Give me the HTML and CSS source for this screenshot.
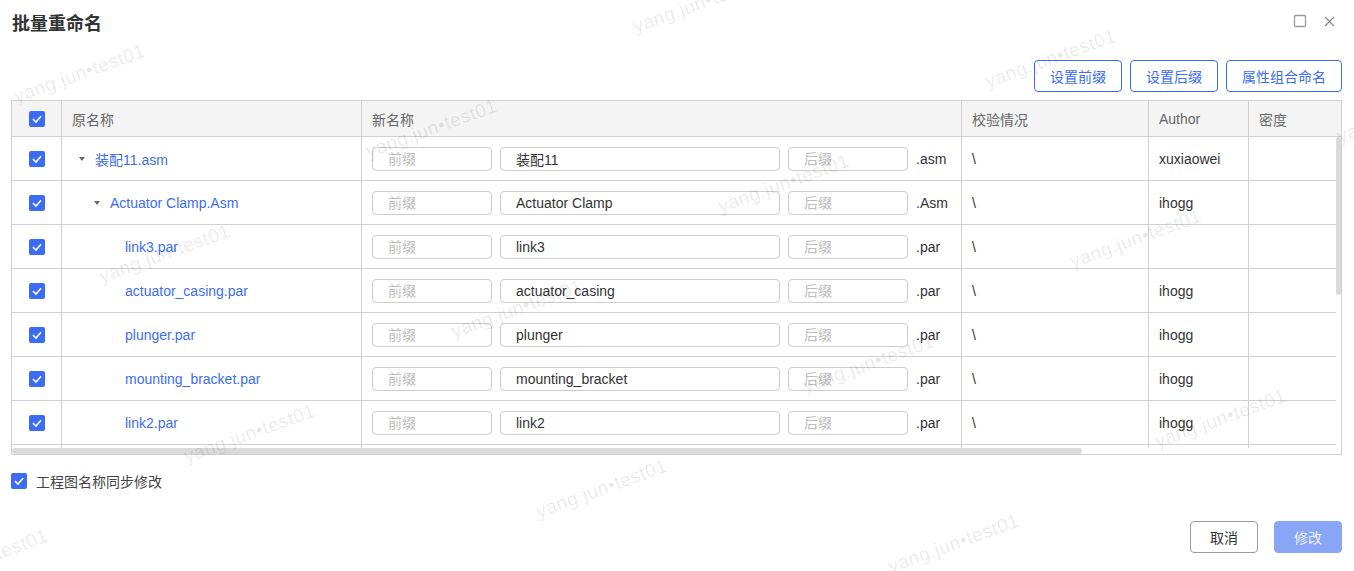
FILE: index.html
```html
<!DOCTYPE html>
<html lang="zh-CN">
<head>
<meta charset="utf-8">
<title>批量重命名</title>
<link rel="stylesheet" href="styles.css">
</head>
<body>
<div class="dialog">
  <div class="titlebar">
    <h1 class="title">批量重命名</h1>
    <div class="win-actions">
      <svg class="icon-max" width="14" height="14" viewBox="0 0 14 14"><rect x="1.5" y="1.5" width="11" height="11" rx="1" fill="none" stroke="#9a9a9a" stroke-width="1.3"/></svg>
      <svg class="icon-close" width="11" height="11" viewBox="0 0 11 11"><path d="M1 1 L10 10 M10 1 L1 10" stroke="#8a8a8a" stroke-width="1.2" fill="none"/></svg>
    </div>
  </div>

  <div class="toolbar">
    <button class="btn-outline">设置前缀</button>
    <button class="btn-outline">设置后缀</button>
    <button class="btn-outline">属性组合命名</button>
  </div>

  <div class="table">
    <div class="row head">
      <div class="cell c-check"><span class="cb"><svg width="16" height="16" viewBox="0 0 16 16"><path d="M4 8.2 L7 11 L12 5.3" fill="none" stroke="#fff" stroke-width="1.6"/></svg></span></div>
      <div class="cell">原名称</div>
      <div class="cell">新名称</div>
      <div class="cell">校验情况</div>
      <div class="cell">Author</div>
      <div class="cell">密度</div>
    </div>
    <div class="body-area">
      <div class="viewport">
        <div class="row">
          <div class="cell c-check"><span class="cb"><svg width="16" height="16" viewBox="0 0 16 16"><path d="M4 8.2 L7 11 L12 5.3" fill="none" stroke="#fff" stroke-width="1.6"/></svg></span></div>
          <div class="cell name lvl0"><span class="arrow"></span><span class="link">装配11.asm</span></div>
          <div class="cell newname"><input class="inp short" placeholder="前缀"><input class="inp long" value="装配11"><input class="inp short" placeholder="后缀"><span class="ext">.asm</span></div>
          <div class="cell">\</div>
          <div class="cell">xuxiaowei</div>
          <div class="cell"></div>
        </div>
        <div class="row">
          <div class="cell c-check"><span class="cb"><svg width="16" height="16" viewBox="0 0 16 16"><path d="M4 8.2 L7 11 L12 5.3" fill="none" stroke="#fff" stroke-width="1.6"/></svg></span></div>
          <div class="cell name lvl1"><span class="arrow"></span><span class="link">Actuator Clamp.Asm</span></div>
          <div class="cell newname"><input class="inp short" placeholder="前缀"><input class="inp long" value="Actuator Clamp"><input class="inp short" placeholder="后缀"><span class="ext">.Asm</span></div>
          <div class="cell">\</div>
          <div class="cell">ihogg</div>
          <div class="cell"></div>
        </div>
        <div class="row">
          <div class="cell c-check"><span class="cb"><svg width="16" height="16" viewBox="0 0 16 16"><path d="M4 8.2 L7 11 L12 5.3" fill="none" stroke="#fff" stroke-width="1.6"/></svg></span></div>
          <div class="cell name lvl2"><span class="leaf"></span><span class="link">link3.par</span></div>
          <div class="cell newname"><input class="inp short" placeholder="前缀"><input class="inp long" value="link3"><input class="inp short" placeholder="后缀"><span class="ext">.par</span></div>
          <div class="cell">\</div>
          <div class="cell"></div>
          <div class="cell"></div>
        </div>
        <div class="row">
          <div class="cell c-check"><span class="cb"><svg width="16" height="16" viewBox="0 0 16 16"><path d="M4 8.2 L7 11 L12 5.3" fill="none" stroke="#fff" stroke-width="1.6"/></svg></span></div>
          <div class="cell name lvl2"><span class="leaf"></span><span class="link">actuator_casing.par</span></div>
          <div class="cell newname"><input class="inp short" placeholder="前缀"><input class="inp long" value="actuator_casing"><input class="inp short" placeholder="后缀"><span class="ext">.par</span></div>
          <div class="cell">\</div>
          <div class="cell">ihogg</div>
          <div class="cell"></div>
        </div>
        <div class="row">
          <div class="cell c-check"><span class="cb"><svg width="16" height="16" viewBox="0 0 16 16"><path d="M4 8.2 L7 11 L12 5.3" fill="none" stroke="#fff" stroke-width="1.6"/></svg></span></div>
          <div class="cell name lvl2"><span class="leaf"></span><span class="link">plunger.par</span></div>
          <div class="cell newname"><input class="inp short" placeholder="前缀"><input class="inp long" value="plunger"><input class="inp short" placeholder="后缀"><span class="ext">.par</span></div>
          <div class="cell">\</div>
          <div class="cell">ihogg</div>
          <div class="cell"></div>
        </div>
        <div class="row">
          <div class="cell c-check"><span class="cb"><svg width="16" height="16" viewBox="0 0 16 16"><path d="M4 8.2 L7 11 L12 5.3" fill="none" stroke="#fff" stroke-width="1.6"/></svg></span></div>
          <div class="cell name lvl2"><span class="leaf"></span><span class="link">mounting_bracket.par</span></div>
          <div class="cell newname"><input class="inp short" placeholder="前缀"><input class="inp long" value="mounting_bracket"><input class="inp short" placeholder="后缀"><span class="ext">.par</span></div>
          <div class="cell">\</div>
          <div class="cell">ihogg</div>
          <div class="cell"></div>
        </div>
        <div class="row">
          <div class="cell c-check"><span class="cb"><svg width="16" height="16" viewBox="0 0 16 16"><path d="M4 8.2 L7 11 L12 5.3" fill="none" stroke="#fff" stroke-width="1.6"/></svg></span></div>
          <div class="cell name lvl2"><span class="leaf"></span><span class="link">link2.par</span></div>
          <div class="cell newname"><input class="inp short" placeholder="前缀"><input class="inp long" value="link2"><input class="inp short" placeholder="后缀"><span class="ext">.par</span></div>
          <div class="cell">\</div>
          <div class="cell">ihogg</div>
          <div class="cell"></div>
        </div>
        <div class="row">
          <div class="cell c-check"><span class="cb"><svg width="16" height="16" viewBox="0 0 16 16"><path d="M4 8.2 L7 11 L12 5.3" fill="none" stroke="#fff" stroke-width="1.6"/></svg></span></div>
          <div class="cell name lvl2"><span class="leaf"></span><span class="link">link1.par</span></div>
          <div class="cell newname"><input class="inp short" placeholder="前缀"><input class="inp long" value="link1"><input class="inp short" placeholder="后缀"><span class="ext">.par</span></div>
          <div class="cell">\</div>
          <div class="cell">ihogg</div>
          <div class="cell"></div>
        </div>
      </div>
      <div class="vscroll"><div class="vthumb"></div></div>
    </div>
    <div class="hscroll"><div class="hthumb"></div></div>
  </div>

  <div class="sync">
    <span class="cb"><svg width="16" height="16" viewBox="0 0 16 16"><path d="M4 8.2 L7 11 L12 5.3" fill="none" stroke="#fff" stroke-width="1.6"/></svg></span>
    <span class="sync-label">工程图名称同步修改</span>
  </div>

  <div class="footer">
    <button class="btn">取消</button>
    <button class="btn primary">修改</button>
  </div>
</div>

<div class="watermarks">
  <span class="wm" style="left:636px;top:17px">yang.jun•test01</span>
  <span class="wm" style="left:988px;top:72px">yang.jun•test01</span>
  <span class="wm" style="left:1340px;top:127px">yang.jun•test01</span>
  <span class="wm" style="left:17px;top:87px">yang.jun•test01</span>
  <span class="wm" style="left:369px;top:142px">yang.jun•test01</span>
  <span class="wm" style="left:721px;top:197px">yang.jun•test01</span>
  <span class="wm" style="left:1073px;top:252px">yang.jun•test01</span>
  <span class="wm" style="left:102px;top:267px">yang.jun•test01</span>
  <span class="wm" style="left:454px;top:322px">yang.jun•test01</span>
  <span class="wm" style="left:806px;top:377px">yang.jun•test01</span>
  <span class="wm" style="left:1158px;top:432px">yang.jun•test01</span>
  <span class="wm" style="left:187px;top:447px">yang.jun•test01</span>
  <span class="wm" style="left:539px;top:502px">yang.jun•test01</span>
  <span class="wm" style="left:891px;top:557px">yang.jun•test01</span>
  <span class="wm" style="left:-80px;top:572px">yang.jun•test01</span>
</div>
</body>
</html>
```

FILE: styles.css
```css
* { box-sizing: border-box; }

html, body {
  margin: 0;
  padding: 0;
  background: #fff;
  width: 1354px;
  height: 571px;
  overflow: hidden;
}

body {
  font-family: "Liberation Sans", "Noto Sans CJK SC", sans-serif;
  font-size: 14px;
  color: #333;
  position: relative;
}

.dialog {
  display: flex;
  flex-direction: column;
  padding: 0 12px 0 11px;
}

.titlebar {
  height: 44px;
  display: flex;
  align-items: center;
  justify-content: space-between;
}

.title {
  margin: 0 0 0 1px;
  font-size: 18px;
  font-weight: 700;
  color: #333;
  font-family: "Noto Sans CJK SC", sans-serif;
  line-height: 24px;
}

.win-actions {
  display: flex;
  align-items: center;
  gap: 17px;
  margin-right: 7px;
  margin-top: -2px;
}

.icon-close { margin-top: 1px; }

.toolbar {
  margin-top: 16px;
  display: flex;
  justify-content: flex-end;
  gap: 8px;
}

.btn-outline {
  height: 32px;
  padding: 0 15px;
  border: 1px solid #3d6df2;
  border-radius: 4px;
  background: #fff;
  color: #3d6df2;
  font-family: "Noto Sans CJK SC", sans-serif;
  font-size: 14px;
  line-height: 30px;
}

.table {
  margin-top: 8px;
  border: 1px solid #d0d0d0;
  height: 355px;
  display: flex;
  flex-direction: column;
  overflow: hidden;
}

.row {
  display: grid;
  grid-template-columns: 50px 300px 600px 187px 100px 160px;
  flex: none;
}

.cell {
  border-right: 1px solid #d0d0d0;
  border-bottom: 1px solid #d0d0d0;
  padding: 0 10px;
  display: flex;
  align-items: center;
  white-space: nowrap;
  overflow: hidden;
  color: #333;
}

.row.head {
  height: 36px;
  background: #f4f4f4;
}

.row.head .cell {
  color: #666;
  font-family: "Noto Sans CJK SC", sans-serif;
}

.row.head .cell:nth-child(5) {
  font-family: "Liberation Sans", sans-serif;
}

.body-area {
  display: flex;
  height: 311px;
  flex: none;
}

.viewport {
  flex: 1;
  overflow: hidden;
  display: flex;
  flex-direction: column;
}

.viewport .row { height: 44px; }

.vscroll {
  width: 5px;
  flex: none;
}

.vthumb {
  width: 5px;
  height: 158px;
  background: #dadada;
  border-radius: 3px;
}

.hscroll {
  height: 6px;
  flex: none;
}

.hthumb {
  width: 1070px;
  height: 6px;
  background: #dadada;
  border-radius: 3px;
}

.c-check {
  justify-content: center;
  padding: 0;
}

.cb {
  width: 16px;
  height: 16px;
  border-radius: 2px;
  background: #3b6cf3;
  display: inline-flex;
  flex: none;
}

.name { padding-left: 10px; }
.lvl1 { padding-left: 25px; }
.lvl2 { padding-left: 40px; }

.arrow, .leaf {
  width: 20px;
  height: 14px;
  flex: none;
  margin-right: 3px;
  display: flex;
  align-items: center;
  justify-content: center;
}

.arrow::before {
  content: "";
  border-left: 3.5px solid transparent;
  border-right: 3.5px solid transparent;
  border-top: 4px solid #666;
  margin-top: 1px;
}

.link {
  color: #3d6df2;
}

.newname {
  gap: 8px;
}

.inp {
  height: 24px;
  border: 1px solid #cccccc;
  border-radius: 4px;
  padding: 0 0 0 15px;
  font-family: "Liberation Sans", "Noto Sans CJK SC", sans-serif;
  font-size: 14px;
  color: #333;
  background: transparent;
  outline: none;
  flex: none;
}

.inp::placeholder {
  color: #bdbdbd;
}

.inp.short { width: 120px; }
.inp.long { width: 280px; }

.ext { color: #333; }

.sync {
  margin-top: 18px;
  display: flex;
  align-items: center;
  gap: 9px;
  height: 16px;
}

.sync-label {
  font-family: "Noto Sans CJK SC", sans-serif;
  color: #444;
  line-height: 16px;
}

.footer {
  margin-top: 32px;
  display: flex;
  justify-content: flex-end;
  gap: 16px;
}

.btn {
  width: 68px;
  height: 32px;
  border: 1px solid #9a9a9a;
  border-radius: 4px;
  background: #fff;
  color: #333;
  font-family: "Noto Sans CJK SC", sans-serif;
  font-size: 14px;
  padding: 0;
}

.btn.primary {
  background: #89a5f6;
  border-color: #89a5f6;
  color: #e9effe;
}

.watermarks {
  position: absolute;
  inset: 0;
  pointer-events: none;
  overflow: hidden;
}

.wm {
  position: absolute;
  font-family: "Liberation Sans", sans-serif;
  font-size: 19px;
  line-height: 20px;
  color: rgba(0, 0, 0, 0.09);
  white-space: nowrap;
  transform-origin: 0 16px;
  transform: rotate(-20deg);
  letter-spacing: 0.5px;
}
```
